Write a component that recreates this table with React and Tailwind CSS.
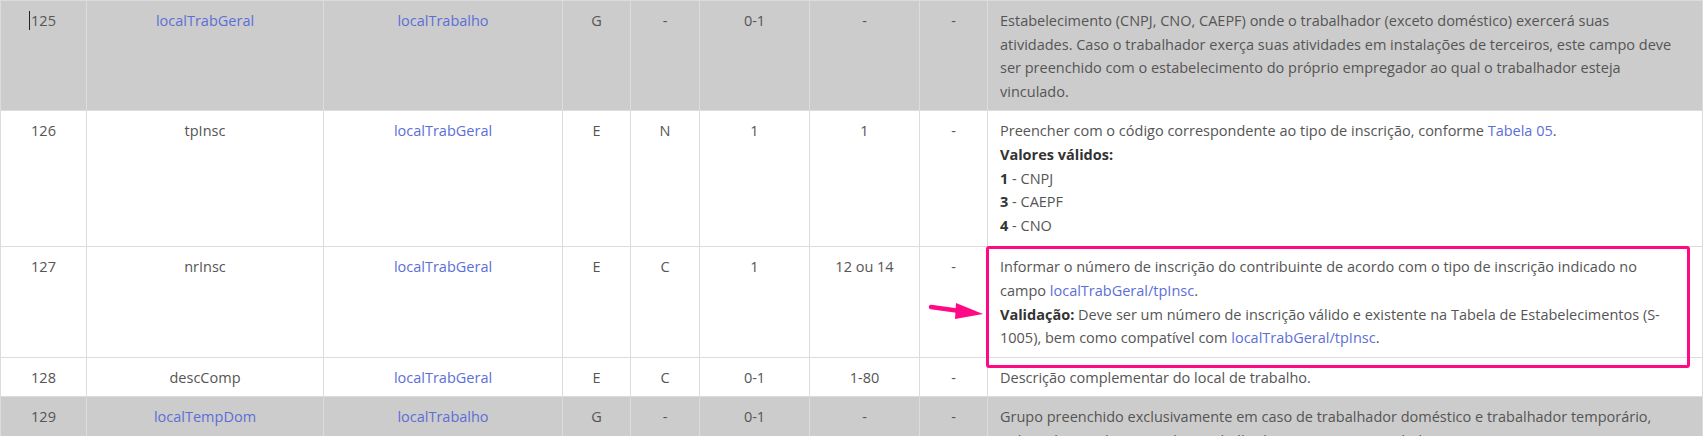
const Link = ({ children }) => (
  <a href="#" className="text-[#5c6fd6] no-underline">{children}</a>
);

const rows = [
  {
    id: '125',
    grey: true,
    cursor: true,
    name: <Link>localTrabGeral</Link>,
    parent: <Link>localTrabalho</Link>,
    tipo: 'G',
    elem: '-',
    ocor: '0-1',
    tam: '-',
    dec: '-',
    desc: (
      <>
        Estabelecimento (CNPJ, CNO, CAEPF) onde o trabalhador (exceto doméstico) exercerá suas<br />
        atividades. Caso o trabalhador exerça suas atividades em instalações de terceiros, este campo deve<br />
        ser preenchido com o estabelecimento do próprio empregador ao qual o trabalhador esteja<br />
        vinculado.
      </>
    ),
  },
  {
    id: '126',
    tall: true,
    name: 'tpInsc',
    parent: <Link>localTrabGeral</Link>,
    tipo: 'E',
    elem: 'N',
    ocor: '1',
    tam: '1',
    dec: '-',
    desc: (
      <>
        Preencher com o código correspondente ao tipo de inscrição, conforme <Link>Tabela 05</Link>.<br />
        <b className="font-bold text-[#333]">Valores válidos:</b><br />
        <b className="font-bold text-[#333]">1</b> - CNPJ<br />
        <b className="font-bold text-[#333]">3</b> - CAEPF<br />
        <b className="font-bold text-[#333]">4</b> - CNO
      </>
    ),
  },
  {
    id: '127',
    name: 'nrInsc',
    parent: <Link>localTrabGeral</Link>,
    tipo: 'E',
    elem: 'C',
    ocor: '1',
    tam: '12 ou 14',
    dec: '-',
    desc: (
      <>
        Informar o número de inscrição do contribuinte de acordo com o tipo de inscrição indicado no<br />
        campo <Link>localTrabGeral/tpInsc</Link>.<br />
        <b className="font-bold text-[#333]">Validação:</b> Deve ser um número de inscrição válido e existente na Tabela de Estabelecimentos (S-<br />
        1005), bem como compatível com <Link>localTrabGeral/tpInsc</Link>.
      </>
    ),
  },
  {
    id: '128',
    name: 'descComp',
    parent: <Link>localTrabGeral</Link>,
    tipo: 'E',
    elem: 'C',
    ocor: '0-1',
    tam: '1-80',
    dec: '-',
    desc: <>Descrição complementar do local de trabalho.</>,
  },
  {
    id: '129',
    grey: true,
    name: <Link>localTempDom</Link>,
    parent: <Link>localTrabalho</Link>,
    tipo: 'G',
    elem: '-',
    ocor: '0-1',
    tam: '-',
    dec: '-',
    desc: (
      <>
        Grupo preenchido exclusivamente em caso de trabalhador doméstico e trabalhador temporário,<br />
        indicando o endereço onde o trabalhador exerce suas atividades.
      </>
    ),
  },
];

export default function App() {
  const cell = 'border border-[#dcdcdc] px-2 pt-2 pb-[7px] align-top text-center';

  return (
    <div className="relative w-[1707px] h-[436px] overflow-hidden bg-white font-['Open_Sans',sans-serif] text-[14.5px] leading-[23.6px] text-[#555]">
      <table className="w-[1703px] border-collapse table-fixed">
        <colgroup>
          <col className="w-[86px]" />
          <col className="w-[237px]" />
          <col className="w-[239px]" />
          <col className="w-[68px]" />
          <col className="w-[69px]" />
          <col className="w-[110px]" />
          <col className="w-[110px]" />
          <col className="w-[68px]" />
          <col />
        </colgroup>
        <tbody>
          {rows.map((r) => (
            <tr key={r.id} className={r.grey ? 'bg-[#cccccc]' : 'bg-white'}>
              <td className={cell}>
                {r.cursor && <span className="inline-block w-px h-[19px] bg-[#222] align-[-4px] -ml-[2px] mr-px" />}
                {r.id}
              </td>
              <td className={cell}>{r.name}</td>
              <td className={cell}>{r.parent}</td>
              <td className={cell}>{r.tipo}</td>
              <td className={cell}>{r.elem}</td>
              <td className={cell}>{r.ocor}</td>
              <td className={cell}>{r.tam}</td>
              <td className={cell}>{r.dec}</td>
              <td className={`border border-[#dcdcdc] pl-3 pr-2 pt-2 align-top text-left whitespace-nowrap ${r.tall ? 'pb-[9px]' : 'pb-[7px]'}`}>
                {r.desc}
              </td>
            </tr>
          ))}
        </tbody>
      </table>

      {/* annotation: highlight box + arrow */}
      <div className="absolute left-[986px] top-[246px] w-[704px] h-[122px] border-[3.5px] border-[#ff0a84] rounded-[3px] pointer-events-none" />
      <svg className="absolute left-[926px] top-[298px]" width="60" height="24" viewBox="0 0 60 24">
        <line x1="5" y1="9" x2="34" y2="13" stroke="#ff0a84" strokeWidth="4.5" strokeLinecap="round" />
        <polygon points="30,5 57,16 29,21" fill="#ff0a84" />
      </svg>
    </div>
  );
}
